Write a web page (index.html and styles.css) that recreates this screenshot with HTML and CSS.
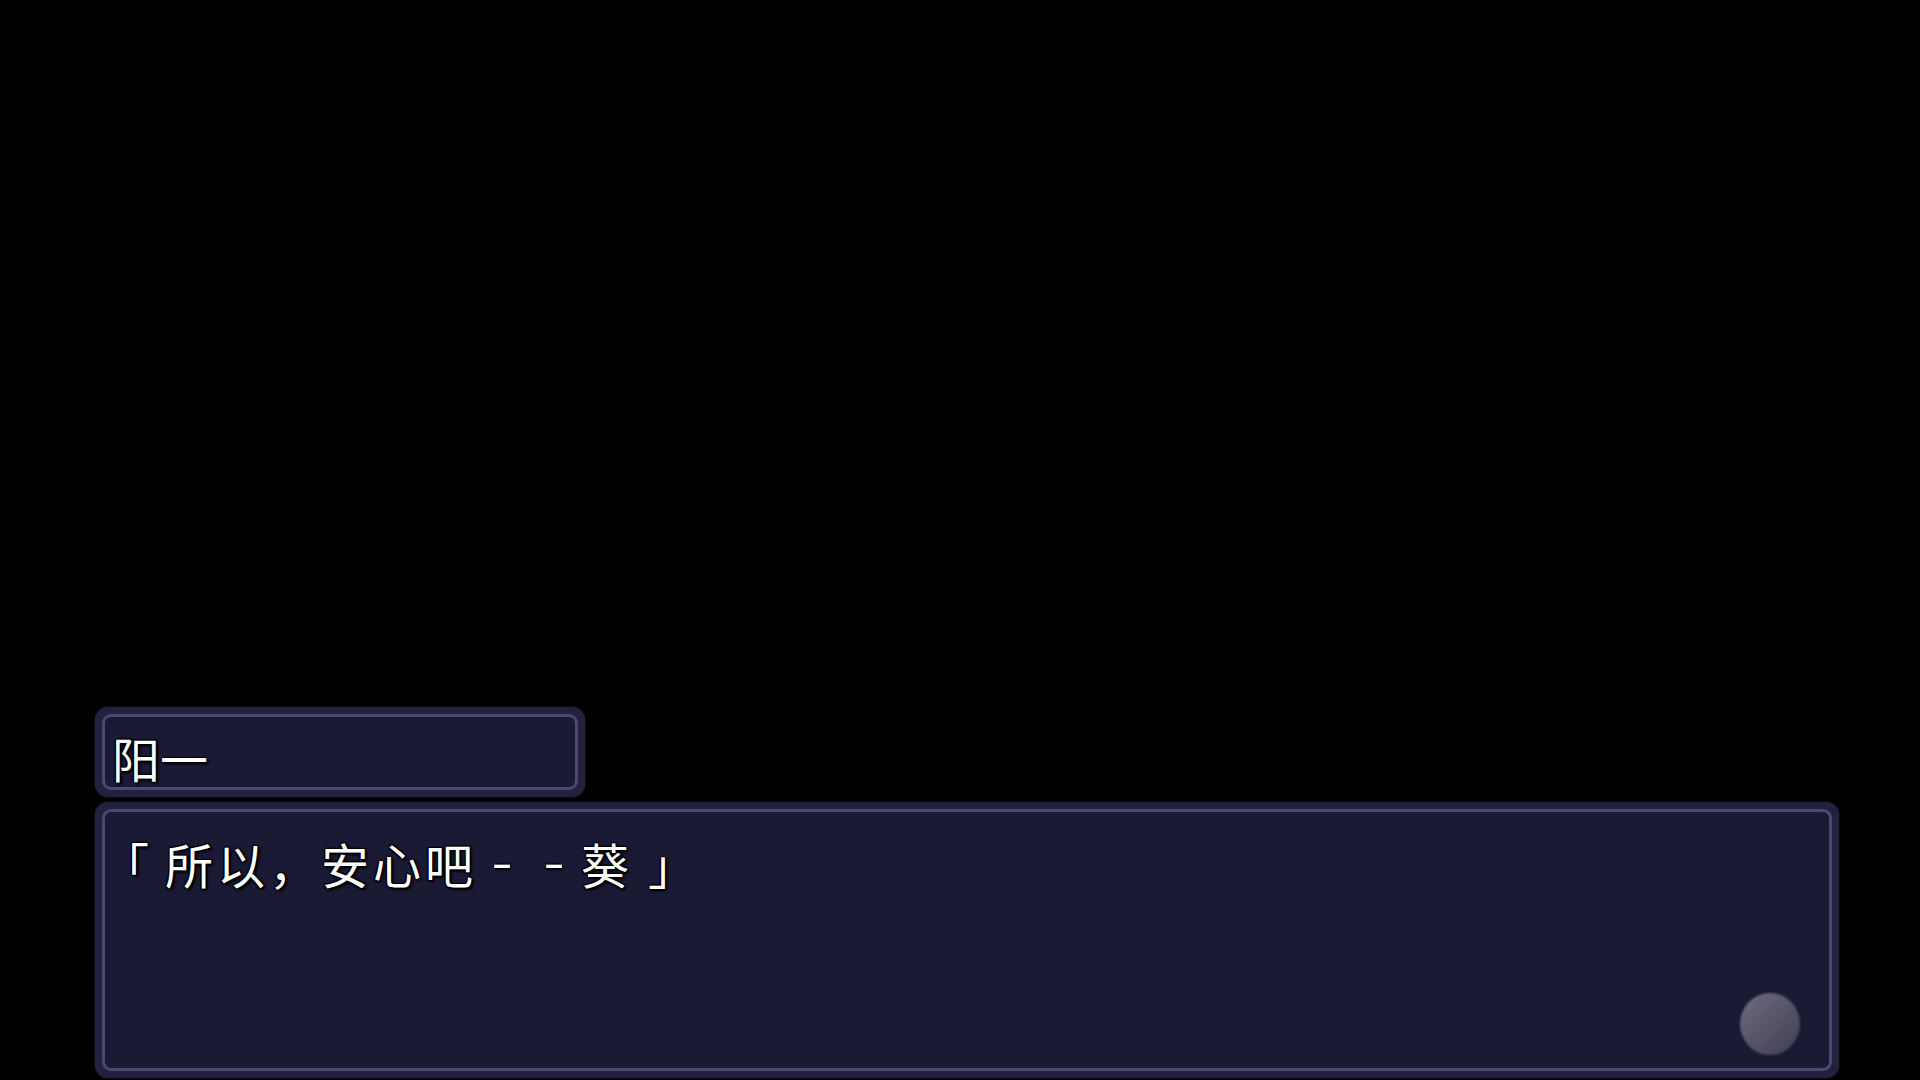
FILE: index.html
```html
<!DOCTYPE html>
<html lang="zh-CN">
<head>
<meta charset="utf-8">
<title>Dialogue</title>
<link rel="stylesheet" href="styles.css">
</head>
<body>
<div class="screen">
  <div class="dialogue">
    <div class="frame name-frame">
      <div class="panel name-panel"><span class="text">阳一</span></div>
    </div>
    <div class="frame msg-frame">
      <div class="panel msg-panel"><span class="text msg-text"><span class="br-open">「</span>所以，安心吧<span class="dash">－</span><span class="dash">－</span>葵<span class="br-close">」</span></span></div>
      <div class="pause-orb"></div>
    </div>
  </div>
</div>
</body>
</html>
```
FILE: styles.css
```css
html, body {
  margin: 0;
  padding: 0;
  background: #000;
}
.screen {
  width: 1920px;
  height: 1080px;
  display: flex;
  flex-direction: column;
  justify-content: flex-end;
  overflow: hidden;
}
.dialogue {
  display: flex;
  flex-direction: column;
  gap: 5px;
  padding: 0 0 2px 95px;
}
.frame {
  position: relative;
  box-sizing: border-box;
  background: #23223e;
  border-radius: 13px;
  padding: 7px;
  box-shadow: 0 0 2px rgba(60, 58, 100, 0.6);
}
.panel {
  box-sizing: border-box;
  height: 100%;
  border: 3px solid #4a4870;
  border-radius: 9px;
  background: #1b1a35;
}
.name-frame {
  width: 490px;
  height: 90px;
}
.msg-frame {
  width: 1744px;
  height: 276px;
}
.text {
  display: block;
  font-family: "Noto Sans CJK SC", "Noto Sans CJK JP", sans-serif;
  font-size: 48px;
  line-height: 48px;
  color: #fff;
  text-shadow: 0 0 2px #000, 1px 1px 2px #000, 2px 2px 3px #000, -1px -1px 1px #000, 1px -1px 1px #000, -1px 1px 1px #000;
}
.name-panel {
  padding: 16px 0 0 7px;
}
.msg-panel {
  padding: 27px 0 0 8px;
}
.msg-text {
  letter-spacing: 4px;
}
.br-open {
  margin-left: -12px;
  margin-right: 12px;
}
.br-close {
  margin-left: 15px;
}
.dash {
  display: inline-block;
  transform: scaleX(0.45);
}
.pause-orb {
  position: absolute;
  right: 39px;
  bottom: 23px;
  width: 60px;
  height: 62px;
  border-radius: 50%;
  background: linear-gradient(135deg, #6e6d80 0%, #56556a 50%, #3e3d52 100%);
  filter: blur(1px);
}
```
